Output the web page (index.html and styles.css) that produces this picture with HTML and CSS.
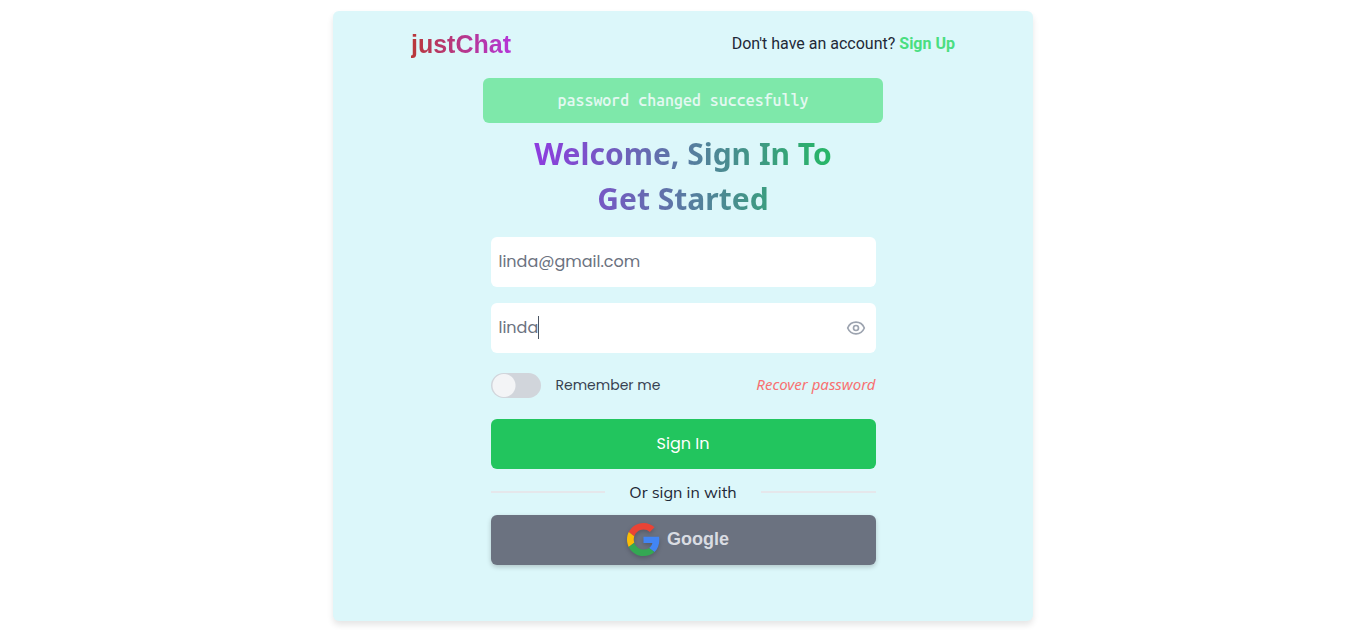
FILE: index.html
```html
<!DOCTYPE html>
<html lang="en">
<head>
<meta charset="utf-8">
<meta name="viewport" content="width=device-width, initial-scale=1">
<title>justChat - Sign In</title>
<link rel="stylesheet" href="styles.css">
</head>
<body>
<main class="card">
  <header class="topbar">
    <div class="brand">justChat</div>
    <p class="signup">Don't have an account? <a class="signup-link" href="#">Sign Up</a></p>
  </header>
  <div class="alert" role="status">password changed succesfully</div>
  <h1 class="title">Welcome, Sign In To Get Started</h1>
  <form class="form">
    <input class="field" type="email" aria-label="Email" value="linda@gmail.com">
    <div class="password">
      <input class="field" type="text" aria-label="Password" value="linda">
      <span class="caret"></span>
      <button class="reveal" type="button" aria-label="Show password">
        <svg viewBox="0 0 24 24" width="20" height="20" fill="none" stroke="currentColor" stroke-width="2" stroke-linecap="round" stroke-linejoin="round"><path d="M2 12C4 7.300 7.600 5 12 5s8 2.300 10 7c-2 4.700-5.600 7-10 7s-8-2.300-10-7z"/><circle cx="12" cy="12" r="3"/></svg>
      </button>
    </div>
    <div class="options">
      <label class="remember"><input class="switch" type="checkbox" role="switch">Remember me</label>
      <a class="recover" href="#">Recover password</a>
    </div>
    <button class="btn btn-primary" type="submit">Sign In</button>
    <div class="divider">Or sign in with</div>
    <button class="btn btn-google" type="button">
      <svg class="google-logo" viewBox="0 0 48 48" width="33" height="33" aria-hidden="true">
        <path fill="#ea4335" d="M24 9.500c3.540 0 6.710 1.220 9.210 3.600l6.850-6.850C35.900 2.380 30.470 0 24 0 14.620 0 6.510 5.380 2.560 13.220l7.980 6.190C12.430 13.720 17.740 9.500 24 9.500z"/>
        <path fill="#4285f4" d="M46.980 24.550c0-1.570-.15-3.090-.38-4.550H24v9.020h12.940c-.58 2.960-2.260 5.480-4.780 7.180l7.730 6c4.510-4.180 7.090-10.360 7.090-17.650z"/>
        <path fill="#fbbc05" d="M10.530 28.590c-.48-1.450-.76-2.990-.76-4.590s.27-3.140.76-4.590l-7.980-6.190C.92 16.460 0 20.120 0 24s.92 7.540 2.560 10.780l7.970-6.190z"/>
        <path fill="#34a853" d="M24 48c6.480 0 11.930-2.130 15.890-5.810l-7.730-6c-2.150 1.450-4.920 2.300-8.160 2.300-6.260 0-11.570-4.220-13.470-9.910l-7.980 6.190C6.510 42.620 14.620 48 24 48z"/>
      </svg>
      Google
    </button>
  </form>
</main>
</body>
</html>
```

FILE: styles.css
```css
* {
  box-sizing: border-box;
}

body {
  margin: 0;
  padding: 11px 0 9px 2px;
  background: #fff;
  color: #1f2937;
  font-family: "Noto Sans", sans-serif;
}

.card {
  max-width: 700px;
  margin: 0 auto;
  padding: 16px 0 56px;
  border-radius: 6px;
  background: #dcf7fa;
  box-shadow: 0 4px 6px rgba(0, 0, 0, 0.1);
}

.topbar {
  display: flex;
  align-items: center;
  justify-content: space-between;
  min-height: 34px;
  padding: 0 78px;
}

.brand {
  background: linear-gradient(90deg, #b93838, #b536d8);
  -webkit-background-clip: text;
  background-clip: text;
  color: transparent;
  font: 700 25px/34px "Liberation Sans", Arial, sans-serif;
}

.signup {
  margin: 0;
  font: 16px/24px Roboto, sans-serif;
}

.signup-link {
  color: #4ade80;
  font-weight: 700;
  text-decoration: none;
}

.alert {
  max-width: 400px;
  margin: 17px auto 0;
  padding: 10px 16px;
  border-radius: 6px;
  background: #7ee8aa;
  color: #e3f8f1;
  font: 500 16px/25px "Ubuntu Mono", "DejaVu Sans Mono", monospace;
  text-align: center;
}

.title {
  max-width: 300px;
  margin: 8px auto 0;
  background: linear-gradient(90deg, #8e3be0, #25b865);
  -webkit-background-clip: text;
  background-clip: text;
  color: transparent;
  font-size: 30px;
  font-weight: 700;
  line-height: 45px;
  text-align: center;
}

.form {
  display: flex;
  flex-direction: column;
  max-width: 385px;
  margin: 16px auto 0;
}

.field {
  width: 100%;
  height: 50px;
  padding: 0 8px 2px;
  border: 0;
  border-radius: 6px;
  outline: 0;
  background: #fff;
  color: #6b7280;
  font: 16px/24px Poppins, Inter, sans-serif;
}

.password {
  position: relative;
  margin-top: 16px;
}

.caret {
  position: absolute;
  top: 13px;
  left: 47px;
  width: 1px;
  height: 23px;
  background: #4b5563;
}

.reveal {
  position: absolute;
  top: 15px;
  right: 10px;
  display: flex;
  padding: 0;
  border: 0;
  background: none;
  color: #9ca3af;
}

.options {
  display: flex;
  align-items: center;
  justify-content: space-between;
  margin: 20px 0 21px;
}

.remember {
  display: flex;
  align-items: center;
  gap: 15px;
  color: #374151;
  font: 14px/25px Poppins, Inter, sans-serif;
}

.switch {
  appearance: none;
  width: 50px;
  height: 25px;
  margin: 0;
  border-radius: 13px;
  background: radial-gradient(circle at 13px 50%, #f3f4f6 11px, #d1d5db 12px);
}

.recover {
  padding-bottom: 3px;
  color: #f87171;
  font: italic 15px/22px "Noto Sans", sans-serif;
  text-decoration: none;
}

.btn {
  display: flex;
  align-items: center;
  justify-content: center;
  height: 50px;
  border: 0;
  border-radius: 6px;
}

.btn-primary {
  background: #22c55e;
  color: #fff;
  font: 16px/24px Poppins, Inter, sans-serif;
}

.divider {
  display: flex;
  align-items: center;
  gap: 24px;
  margin: 11px 0;
  font: 16px/24px Mulish, Nunito, "Open Sans", sans-serif;
}

.divider::before,
.divider::after {
  content: "";
  flex: 1;
  height: 2px;
  background: #e5e7eb;
}

.btn-google {
  gap: 7px;
  padding: 0 16px 2px 6px;
  background: #6b7280;
  box-shadow: 0 2px 5px rgba(0, 0, 0, 0.2);
  color: #d9dce2;
  font: 700 18px/24px "Liberation Sans", Arial, sans-serif;
}

.google-logo {
  filter: drop-shadow(0 2px 2px rgba(0, 0, 0, 0.2));
}
```
